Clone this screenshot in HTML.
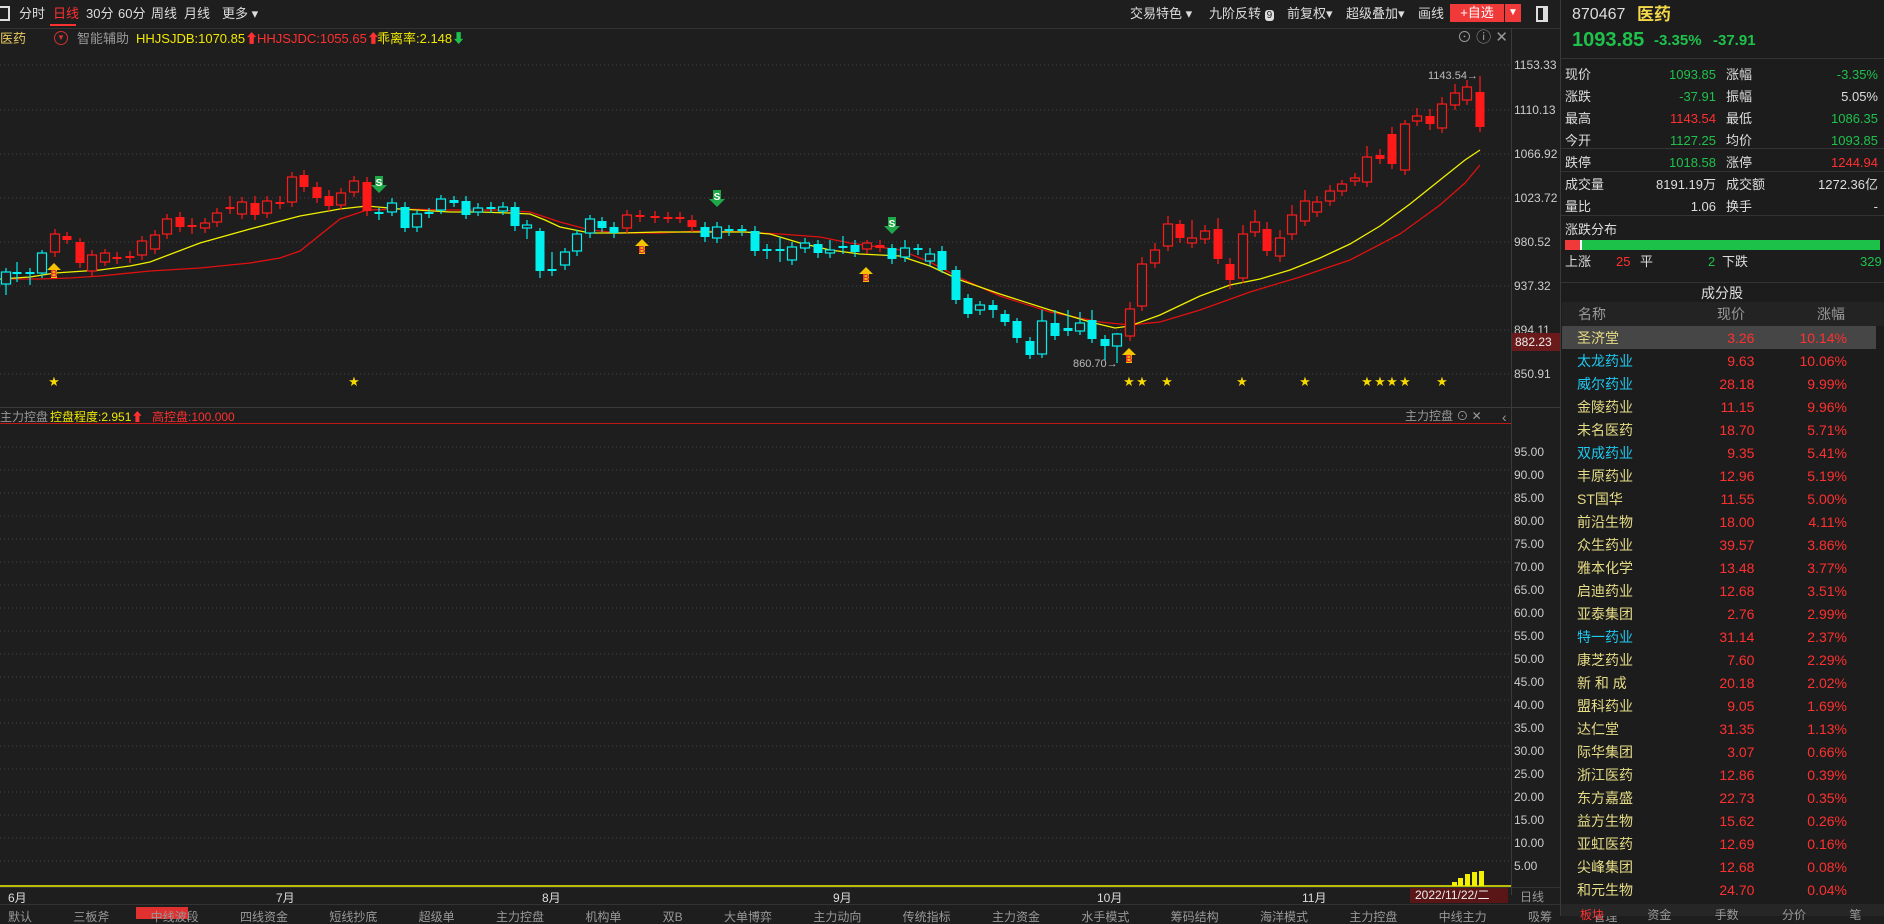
<!DOCTYPE html>
<html><head><meta charset="utf-8"><style>
*{margin:0;padding:0;box-sizing:border-box}
body{width:1884px;height:916px;background:#1e1e1e;overflow:hidden;position:relative;font-family:"Liberation Sans","Noto Sans CJK SC",sans-serif;color:#ccc;font-size:13px}
.a{position:absolute;white-space:nowrap;line-height:1}
.g{color:#1fc14d}.r{color:#ff3030}.y{color:#f0e800}.w{color:#ddd}.gr{color:#999}
.rt td{height:23px;font-size:14px;padding:0}
</style></head><body>
<!-- top bar -->
<div class="a" style="left:0;top:6px;width:10px;height:15px;border:2px solid #ddd;border-left:none"></div>
<div class="a w" style="left:19px;top:7px">分时</div>
<div class="a r" style="left:53px;top:7px">日线</div>
<div class="a" style="left:50px;top:24px;width:26px;height:2px;background:#ff3030"></div>
<div class="a w" style="left:86px;top:7px">30分</div>
<div class="a w" style="left:118px;top:7px">60分</div>
<div class="a w" style="left:151px;top:7px">周线</div>
<div class="a w" style="left:184px;top:7px">月线</div>
<div class="a w" style="left:222px;top:7px">更多 ▾</div>
<div class="a w" style="left:1130px;top:7px">交易特色 ▾</div>
<div class="a w" style="left:1209px;top:7px">九阶反转 <span style="background:#ddd;color:#222;border-radius:3px;font-size:10px;padding:0 2px">9</span></div>
<div class="a w" style="left:1287px;top:7px">前复权▾</div>
<div class="a w" style="left:1346px;top:7px">超级叠加▾</div>
<div class="a w" style="left:1418px;top:7px">画线</div>
<div class="a" style="left:1450px;top:4px;width:54px;height:18px;background:#f03a3a;color:#fff;text-align:center;line-height:18px">+自选</div>
<div class="a" style="left:1505px;top:4px;width:16px;height:18px;background:#f03a3a;color:#fff;text-align:center;line-height:18px;font-size:10px">▼</div>
<div class="a" style="left:1536px;top:6px;width:12px;height:16px;border:2px solid #ddd;border-right-width:5px"></div>
<div class="a" style="left:0;top:28px;width:1560px;height:1px;background:#333"></div>
<!-- chart header -->
<div class="a" style="left:0;top:32px;color:#e8c860">医药</div>
<div class="a" style="left:54px;top:31px;width:14px;height:14px;border:1px solid #c33;border-radius:50%;color:#c33;font-size:8px;text-align:center;line-height:12px">▼</div>
<div class="a gr" style="left:77px;top:32px">智能辅助</div>
<div class="a y" style="left:136px;top:32px">HHJSJDB:1070.85<span class="r">⬆</span></div>
<div class="a r" style="left:257px;top:32px">HHJSJDC:1055.65⬆</div>
<div class="a y" style="left:377px;top:32px">乖离率:2.148<span class="g">⬇</span></div>
<div class="a gr" style="left:1457px;top:30px;font-size:15px">⊙ ⓘ ✕</div>
<!-- price axis -->
<div class="a" style="left:1511px;top:28px;width:1px;height:867px;background:#3a3a3a"></div>
<div class="a" style="left:1560px;top:0;width:1px;height:916px;background:#3a3a3a"></div>
<div class="a" style="left:1514px;top:59px;font-size:12px;color:#ccc">1153.33</div>
<div class="a" style="left:1514px;top:104px;font-size:12px;color:#ccc">1110.13</div>
<div class="a" style="left:1514px;top:148px;font-size:12px;color:#ccc">1066.92</div>
<div class="a" style="left:1514px;top:192px;font-size:12px;color:#ccc">1023.72</div>
<div class="a" style="left:1514px;top:236px;font-size:12px;color:#ccc">980.52</div>
<div class="a" style="left:1514px;top:280px;font-size:12px;color:#ccc">937.32</div>
<div class="a" style="left:1514px;top:324px;font-size:12px;color:#ccc">894.11</div>
<div class="a" style="left:1512px;top:333px;width:48px;height:18px;background:#6a1a1a;color:#eee;font-size:12px;line-height:18px;padding-left:3px">882.23</div>
<div class="a" style="left:1514px;top:368px;font-size:12px;color:#ccc">850.91</div>
<div class="a" style="left:0;top:407px;width:1560px;height:1px;background:#3a3a3a"></div>
<div class="a gr" style="left:1502px;top:410px;font-size:14px">‹</div>
<!-- indicator header -->
<div class="a gr" style="left:0;top:411px;font-size:12px">主力控盘</div>
<div class="a y" style="left:50px;top:411px;font-size:12px">控盘程度:2.951<span class="r">⬆</span></div>
<div class="a r" style="left:152px;top:411px;font-size:12px">高控盘:100.000</div>
<div class="a gr" style="left:1405px;top:410px;font-size:12px">主力控盘 ⊙ ✕</div>
<div class="a" style="left:0;top:423px;width:1511px;height:1px;background:#c01818"></div>
<div style="position:absolute;left:1514px;top:441px;font-size:12px;color:#ccc;line-height:23px">95.00<br>90.00<br>85.00<br>80.00<br>75.00<br>70.00<br>65.00<br>60.00<br>55.00<br>50.00<br>45.00<br>40.00<br>35.00<br>30.00<br>25.00<br>20.00<br>15.00<br>10.00<br>5.00</div>
<svg class="a" style="left:0;top:0" width="1511" height="916">
<g stroke="#444" stroke-dasharray="1,3" stroke-width="1">
<path d="M0 65H1511M0 110H1511M0 154H1511M0 198H1511M0 242H1511M0 286H1511M0 330H1511M0 374H1511"/>
<path d="M0 447H1511M0 470H1511M0 493H1511M0 516H1511M0 539H1511M0 562H1511M0 585H1511M0 608H1511M0 631H1511M0 654H1511M0 677H1511M0 700H1511M0 723H1511M0 746H1511M0 769H1511M0 792H1511M0 815H1511M0 838H1511M0 861H1511"/>
</g>
<polyline fill="none" stroke="#e01010" stroke-width="1.3" points="0,279 40,279 70,278 100,276 150,271 200,268 250,263 280,258 300,251 340,219 367,210 400,209 450,210 500,210 530,212 560,222 590,230 620,233 660,233 700,231 745,232 780,234 820,237 850,243 900,250 930,262 960,278 1000,296 1050,312 1100,322 1130,325 1160,322 1200,310 1250,292 1300,277 1350,260 1400,234 1440,205 1465,183 1480,165"/>
<polyline fill="none" stroke="#f0f000" stroke-width="1.3" points="0,279 30,277 55,273 100,270 130,266 150,262 200,243 250,229 300,216 340,209 367,206 400,209 450,212 480,212 510,213 530,214 545,220 560,227 590,233 620,233 660,232 700,232 745,232 770,234 800,243 830,250 860,254 900,256 930,266 960,280 1000,294 1050,310 1090,322 1115,328 1130,326 1160,315 1200,296 1230,285 1260,279 1290,270 1320,258 1350,244 1380,226 1410,204 1440,180 1465,160 1480,150"/>
<g stroke="#ff1a1a" stroke-width="1.2" fill="none">
<path d="M55 229V257M67 232V244M80 238V268M92 250V276M105 249V266M117 252V264M130 251V263M142 236V260M155 230V254M167 214V239M180 212V232M192 218V234M205 218V233M217 208V227M230 196V214M242 197V219M255 196V220M267 196V218M280 196V209M292 172V207M304 170V192M317 182V203M329 190V211M341 188V210M354 176V197M367 177V216M627 210V233M640 210V222M655 211V223M668 212V223M680 212V223M692 215V232M867 240V254M880 240V252M1130 302V341M1142 257V311M1155 243V268M1168 216V251M1180 220V243M1192 220V248M1205 225V244M1218 218V264M1230 258V289M1243 225V283M1255 210V237M1267 222V256M1280 230V262M1292 205V240M1305 190V226M1317 196V217M1330 185V206M1342 180V196M1355 173V186M1367 146V187M1380 149V164M1392 127V169M1405 120V175M1417 108V126M1430 109V130M1442 97V133M1455 84V110M1467 80V105M1480 76V132"/>
</g>
<g fill="#ff1a1a">
<rect x="62.5" y="236" width="9" height="4"/><rect x="75.5" y="242" width="9" height="21"/><rect x="112.5" y="257" width="9" height="2"/><rect x="125.5" y="256" width="9" height="2"/><rect x="175.5" y="217" width="9" height="10"/><rect x="187.5" y="225" width="9" height="2"/><rect x="225.5" y="207" width="9" height="2"/><rect x="250.5" y="203" width="9" height="12"/><rect x="275.5" y="202" width="9" height="2"/><rect x="299.5" y="175" width="9" height="12"/><rect x="312.5" y="187" width="9" height="11"/><rect x="324.5" y="196" width="9" height="10"/><rect x="362.5" y="182" width="9" height="29"/><rect x="635.5" y="215" width="9" height="2"/><rect x="650.5" y="216" width="9" height="2"/><rect x="663.5" y="217" width="9" height="2"/><rect x="675.5" y="217" width="9" height="2"/><rect x="687.5" y="220" width="9" height="7"/><rect x="875.5" y="245" width="9" height="3"/><rect x="1175.5" y="224" width="9" height="14"/><rect x="1213.5" y="229" width="9" height="30"/><rect x="1225.5" y="264" width="9" height="16"/><rect x="1262.5" y="229" width="9" height="22"/><rect x="1375.5" y="155" width="9" height="4"/><rect x="1387.5" y="134" width="9" height="30"/><rect x="1425.5" y="116" width="9" height="8"/><rect x="1475.5" y="92" width="9" height="35"/>
</g>
<g fill="#1e1e1e" stroke="#ff1a1a" stroke-width="1.2">
<rect x="50.5" y="234" width="9" height="18"/><rect x="87.5" y="255" width="9" height="16"/><rect x="100.5" y="253" width="9" height="9"/><rect x="137.5" y="241" width="9" height="14"/><rect x="150.5" y="235" width="9" height="14"/><rect x="162.5" y="219" width="9" height="15"/><rect x="200.5" y="223" width="9" height="5"/><rect x="212.5" y="213" width="9" height="9"/><rect x="237.5" y="202" width="9" height="12"/><rect x="262.5" y="201" width="9" height="12"/><rect x="287.5" y="177" width="9" height="25"/><rect x="336.5" y="193" width="9" height="12"/><rect x="349.5" y="181" width="9" height="11"/><rect x="622.5" y="215" width="9" height="13"/><rect x="862.5" y="243" width="9" height="6"/><rect x="1125.5" y="309" width="9" height="27"/><rect x="1137.5" y="264" width="9" height="42"/><rect x="1150.5" y="250" width="9" height="13"/><rect x="1163.5" y="224" width="9" height="22"/><rect x="1187.5" y="238" width="9" height="5"/><rect x="1200.5" y="231" width="9" height="8"/><rect x="1238.5" y="234" width="9" height="44"/><rect x="1250.5" y="222" width="9" height="10"/><rect x="1275.5" y="238" width="9" height="18"/><rect x="1287.5" y="215" width="9" height="19"/><rect x="1300.5" y="201" width="9" height="20"/><rect x="1312.5" y="202" width="9" height="10"/><rect x="1325.5" y="191" width="9" height="10"/><rect x="1337.5" y="184" width="9" height="7"/><rect x="1350.5" y="178" width="9" height="3"/><rect x="1362.5" y="157" width="9" height="25"/><rect x="1400.5" y="124" width="9" height="46"/><rect x="1412.5" y="116" width="9" height="5"/><rect x="1437.5" y="104" width="9" height="24"/><rect x="1450.5" y="93" width="9" height="12"/><rect x="1462.5" y="87" width="9" height="13"/>
</g>
<g stroke="#00f0f0" stroke-width="1.2">
<path d="M6 268V295M17 262V282M30 268V285M42 250V278M379 208V220M392 198V216M405 202V232M417 210V232M429 208V218M441 195V214M454 196V207M466 196V219M478 203V216M491 202V213M503 202V215M515 202V231M527 220V239M540 228V278M552 252V276M565 248V270M577 230V256M590 215V238M602 217V232M614 222V238M705 222V242M717 222V243M729 225V236M742 225V236M755 226V256M767 244V259M780 237V262M792 242V265M805 238V253M818 240V258M830 240V258M843 236V254M855 240V257M892 244V264M905 240V262M918 244V255M930 248V266M942 246V273M956 266V304M968 294V318M980 301V315M993 300V318M1005 310V326M1017 318V343M1030 337V359M1042 310V358M1055 310V340M1068 310V336M1080 312V335M1092 310V343M1105 335V360M1117 333V363"/>
</g>
<g fill="#00f0f0">
<rect x="12.5" y="272" width="9" height="2"/><rect x="25.5" y="272" width="9" height="2"/><rect x="374.5" y="212" width="9" height="2"/><rect x="400.5" y="207" width="9" height="21"/><rect x="424.5" y="212" width="9" height="2"/><rect x="449.5" y="200" width="9" height="3"/><rect x="461.5" y="201" width="9" height="14"/><rect x="486.5" y="207" width="9" height="2"/><rect x="510.5" y="207" width="9" height="19"/><rect x="535.5" y="231" width="9" height="40"/><rect x="547.5" y="269" width="9" height="2"/><rect x="597.5" y="221" width="9" height="7"/><rect x="609.5" y="227" width="9" height="6"/><rect x="700.5" y="227" width="9" height="10"/><rect x="724.5" y="229" width="9" height="2"/><rect x="737.5" y="229" width="9" height="2"/><rect x="750.5" y="231" width="9" height="20"/><rect x="762.5" y="249" width="9" height="2"/><rect x="775.5" y="249" width="9" height="2"/><rect x="813.5" y="244" width="9" height="9"/><rect x="838.5" y="246" width="9" height="2"/><rect x="850.5" y="245" width="9" height="7"/><rect x="887.5" y="248" width="9" height="11"/><rect x="913.5" y="248" width="9" height="2"/><rect x="937.5" y="251" width="9" height="19"/><rect x="951.5" y="270" width="9" height="30"/><rect x="963.5" y="298" width="9" height="16"/><rect x="988.5" y="305" width="9" height="5"/><rect x="1000.5" y="314" width="9" height="8"/><rect x="1012.5" y="321" width="9" height="17"/><rect x="1025.5" y="341" width="9" height="14"/><rect x="1050.5" y="323" width="9" height="13"/><rect x="1063.5" y="328" width="9" height="3"/><rect x="1087.5" y="320" width="9" height="19"/><rect x="1100.5" y="339" width="9" height="7"/>
</g>
<g fill="#1e1e1e" stroke="#00f0f0" stroke-width="1.2">
<rect x="1.5" y="272" width="9" height="12"/><rect x="37.5" y="253" width="9" height="20"/><rect x="387.5" y="203" width="9" height="9"/><rect x="412.5" y="214" width="9" height="13"/><rect x="436.5" y="199" width="9" height="11"/><rect x="473.5" y="208" width="9" height="4"/><rect x="498.5" y="207" width="9" height="4"/><rect x="522.5" y="225" width="9" height="3"/><rect x="560.5" y="252" width="9" height="13"/><rect x="572.5" y="234" width="9" height="17"/><rect x="585.5" y="219" width="9" height="14"/><rect x="712.5" y="227" width="9" height="11"/><rect x="787.5" y="247" width="9" height="13"/><rect x="800.5" y="243" width="9" height="5"/><rect x="825.5" y="250" width="9" height="3"/><rect x="900.5" y="248" width="9" height="9"/><rect x="925.5" y="254" width="9" height="7"/><rect x="975.5" y="305" width="9" height="5"/><rect x="1037.5" y="321" width="9" height="33"/><rect x="1075.5" y="323" width="9" height="8"/><rect x="1112.5" y="334" width="9" height="12"/>
</g>
<text x="1428" y="79" fill="#bbb" font-size="11" font-family="Liberation Sans">1143.54→</text>
<text x="1073" y="367" fill="#bbb" font-size="11" font-family="Liberation Sans">860.70→</text>
<g font-family="Liberation Sans" font-size="10" font-weight="bold" text-anchor="middle">
<g fill="#f5c400"><path d="M54 263l7 7h-4v8h-6v-8h-4z"/><path d="M642 239l7 7h-4v8h-6v-8h-4z"/><path d="M866 267l7 7h-4v8h-6v-8h-4z"/><path d="M1129 348l7 7h-4v8h-6v-8h-4z"/></g>
<g fill="#e83030"><text x="54" y="277">B</text><text x="642" y="253">B</text><text x="866" y="281">B</text><text x="1129" y="362">B</text></g>
<g fill="#1ea848"><path d="M375 176h8v9h4l-8 8-8-8h4z"/><path d="M713 190h8v9h4l-8 8-8-8h4z"/><path d="M888 217h8v9h4l-8 8-8-8h4z"/></g>
<g fill="#fff"><text x="379" y="186">S</text><text x="717" y="200">S</text><text x="892" y="227">S</text></g>
</g>
<g fill="#f5d800" font-size="13" font-family="DejaVu Sans" text-anchor="middle">
<text x="54" y="386">★</text><text x="354" y="386">★</text><text x="1129" y="386">★</text><text x="1142" y="386">★</text><text x="1167" y="386">★</text><text x="1242" y="386">★</text><text x="1305" y="386">★</text><text x="1367" y="386">★</text><text x="1380" y="386">★</text><text x="1392" y="386">★</text><text x="1405" y="386">★</text><text x="1442" y="386">★</text>
</g>
<path d="M0 886H1511" stroke="#f0f000" stroke-width="1.5"/>
<g fill="#f0f000"><rect x="1452" y="882" width="5" height="4"/><rect x="1458" y="878" width="5" height="8"/><rect x="1465" y="874" width="5" height="12"/><rect x="1472" y="872" width="5" height="14"/><rect x="1479" y="871" width="5" height="15"/></g>
</svg>
<!-- date axis -->
<div class="a" style="left:0;top:887px;width:1560px;height:1px;background:#333"></div>
<div class="a w" style="left:8px;top:892px;font-size:12px">6月</div>
<div class="a w" style="left:276px;top:892px;font-size:12px">7月</div>
<div class="a w" style="left:542px;top:892px;font-size:12px">8月</div>
<div class="a w" style="left:833px;top:892px;font-size:12px">9月</div>
<div class="a w" style="left:1097px;top:892px;font-size:12px">10月</div>
<div class="a w" style="left:1302px;top:892px;font-size:12px">11月</div>
<div class="a" style="left:1410px;top:888px;width:98px;height:15px;background:#5a1616;color:#eee;font-size:12px;line-height:15px;padding-left:5px">2022/11/22/二</div>
<div class="a gr" style="left:1520px;top:891px;font-size:12px">日线</div>
<div class="a" style="left:0;top:904px;width:1560px;height:1px;background:#333"></div>
<div class="a" style="left:136px;top:907px;width:52px;height:12px;background:#e03030"></div>
<div class="a gr" style="left:8px;top:911px;font-size:12px;word-spacing:38px">默认 三板斧 中线波段 四线资金 短线抄底 超级单 主力控盘 机构单 双B 大单博弈 主力动向 传统指标 主力资金 水手模式 筹码结构 海洋模式 主力控盘 中线主力 吸筹 管理</div>
<!-- right panel -->
<div class="a" style="left:1561px;top:0;width:323px;height:916px;background:#1c1c1c"></div>
<div class="a w" style="left:1572px;top:7px;font-size:16px">870467</div>
<div class="a" style="left:1637px;top:6px;font-size:17px;font-weight:bold;color:#f5d94a">医药</div>
<div class="a g" style="left:1572px;top:30px;font-size:20px;font-weight:bold">1093.85</div>
<div class="a g" style="left:1654px;top:33px;font-size:15px;font-weight:bold">-3.35%</div>
<div class="a g" style="left:1713px;top:33px;font-size:15px;font-weight:bold">-37.91</div>
<div class="a" style="left:1561px;top:58px;width:323px;height:1px;background:#333"></div>
<div class="a" style="left:1561px;top:148px;width:323px;height:1px;background:#333"></div>
<div class="a" style="left:1561px;top:171px;width:323px;height:1px;background:#333"></div>
<div class="a" style="left:1561px;top:215px;width:323px;height:1px;background:#333"></div>
<div class="a" style="left:1561px;top:282px;width:323px;height:1px;background:#333"></div>
<div style="position:absolute;left:1565px;top:64px;line-height:22px;font-size:13px;color:#ddd">现价<br>涨跌<br>最高<br>今开<br>跌停<br>成交量<br>量比</div>
<div style="position:absolute;left:1726px;top:64px;line-height:22px;font-size:13px;color:#ddd">涨幅<br>振幅<br>最低<br>均价<br>涨停<br>成交额<br>换手</div>
<div style="position:absolute;right:168px;top:64px;line-height:22px;font-size:13px;text-align:right"><span class="g">1093.85</span><br><span class="g">-37.91</span><br><span class="r">1143.54</span><br><span class="g">1127.25</span><br><span class="g">1018.58</span><br><span class="w">8191.19万</span><br><span class="w">1.06</span></div>
<div style="position:absolute;right:6px;top:64px;line-height:22px;font-size:13px;text-align:right"><span class="g">-3.35%</span><br><span class="w">5.05%</span><br><span class="g">1086.35</span><br><span class="g">1093.85</span><br><span class="r">1244.94</span><br><span class="w">1272.36亿</span><br><span class="w">-</span></div>
<div class="a w" style="left:1565px;top:223px">涨跌分布</div>
<div class="a" style="left:1565px;top:240px;width:15px;height:10px;background:#f03a3a"></div>
<div class="a" style="left:1580px;top:240px;width:2px;height:10px;background:#fff"></div>
<div class="a" style="left:1582px;top:240px;width:298px;height:10px;background:#1cc14a"></div>
<div class="a w" style="left:1565px;top:255px">上涨</div>
<div class="a r" style="left:1616px;top:255px">25</div>
<div class="a w" style="left:1640px;top:255px">平</div>
<div class="a g" style="left:1708px;top:255px">2</div>
<div class="a w" style="left:1722px;top:255px">下跌</div>
<div class="a g" style="left:1860px;top:255px">329</div>
<div class="a w" style="left:1701px;top:286px;font-size:14px">成分股</div>
<div class="a" style="left:1562px;top:302px;width:322px;height:24px;background:#232323"></div>
<div class="a gr" style="left:1578px;top:307px;font-size:14px">名称</div>
<div class="a gr" style="left:1717px;top:307px;font-size:14px">现价</div>
<div class="a gr" style="left:1817px;top:307px;font-size:14px">涨幅</div>
<div class="a" style="left:1562px;top:326px;width:314px;height:23px;background:#464646"></div>
<table class="rt" style="position:absolute;left:1577px;top:326px;border-collapse:collapse;width:270px">
<tr><td style="color:#e6dc86">圣济堂</td><td class="r" align="right">3.26</td><td class="r" align="right">10.14%</td></tr>
<tr><td style="color:#1ec8f0">太龙药业</td><td class="r" align="right">9.63</td><td class="r" align="right">10.06%</td></tr>
<tr><td style="color:#1ec8f0">威尔药业</td><td class="r" align="right">28.18</td><td class="r" align="right">9.99%</td></tr>
<tr><td style="color:#e6dc86">金陵药业</td><td class="r" align="right">11.15</td><td class="r" align="right">9.96%</td></tr>
<tr><td style="color:#e6dc86">未名医药</td><td class="r" align="right">18.70</td><td class="r" align="right">5.71%</td></tr>
<tr><td style="color:#1ec8f0">双成药业</td><td class="r" align="right">9.35</td><td class="r" align="right">5.41%</td></tr>
<tr><td style="color:#e6dc86">丰原药业</td><td class="r" align="right">12.96</td><td class="r" align="right">5.19%</td></tr>
<tr><td style="color:#e6dc86">ST国华</td><td class="r" align="right">11.55</td><td class="r" align="right">5.00%</td></tr>
<tr><td style="color:#e6dc86">前沿生物</td><td class="r" align="right">18.00</td><td class="r" align="right">4.11%</td></tr>
<tr><td style="color:#e6dc86">众生药业</td><td class="r" align="right">39.57</td><td class="r" align="right">3.86%</td></tr>
<tr><td style="color:#e6dc86">雅本化学</td><td class="r" align="right">13.48</td><td class="r" align="right">3.77%</td></tr>
<tr><td style="color:#e6dc86">启迪药业</td><td class="r" align="right">12.68</td><td class="r" align="right">3.51%</td></tr>
<tr><td style="color:#e6dc86">亚泰集团</td><td class="r" align="right">2.76</td><td class="r" align="right">2.99%</td></tr>
<tr><td style="color:#1ec8f0">特一药业</td><td class="r" align="right">31.14</td><td class="r" align="right">2.37%</td></tr>
<tr><td style="color:#e6dc86">康芝药业</td><td class="r" align="right">7.60</td><td class="r" align="right">2.29%</td></tr>
<tr><td style="color:#e6dc86">新 和 成</td><td class="r" align="right">20.18</td><td class="r" align="right">2.02%</td></tr>
<tr><td style="color:#e6dc86">盟科药业</td><td class="r" align="right">9.05</td><td class="r" align="right">1.69%</td></tr>
<tr><td style="color:#e6dc86">达仁堂</td><td class="r" align="right">31.35</td><td class="r" align="right">1.13%</td></tr>
<tr><td style="color:#e6dc86">际华集团</td><td class="r" align="right">3.07</td><td class="r" align="right">0.66%</td></tr>
<tr><td style="color:#e6dc86">浙江医药</td><td class="r" align="right">12.86</td><td class="r" align="right">0.39%</td></tr>
<tr><td style="color:#e6dc86">东方嘉盛</td><td class="r" align="right">22.73</td><td class="r" align="right">0.35%</td></tr>
<tr><td style="color:#e6dc86">益方生物</td><td class="r" align="right">15.62</td><td class="r" align="right">0.26%</td></tr>
<tr><td style="color:#e6dc86">亚虹医药</td><td class="r" align="right">12.69</td><td class="r" align="right">0.16%</td></tr>
<tr><td style="color:#e6dc86">尖峰集团</td><td class="r" align="right">12.68</td><td class="r" align="right">0.08%</td></tr>
<tr><td style="color:#e6dc86">和元生物</td><td class="r" align="right">24.70</td><td class="r" align="right">0.04%</td></tr>
</table>
<div class="a" style="left:1561px;top:904px;width:323px;height:12px;background:#262626"></div>
<div class="a gr" style="left:1580px;top:909px;font-size:12px;word-spacing:40px"><span class="r">板块</span> 资金 手数 分价 笔</div>
</body></html>
